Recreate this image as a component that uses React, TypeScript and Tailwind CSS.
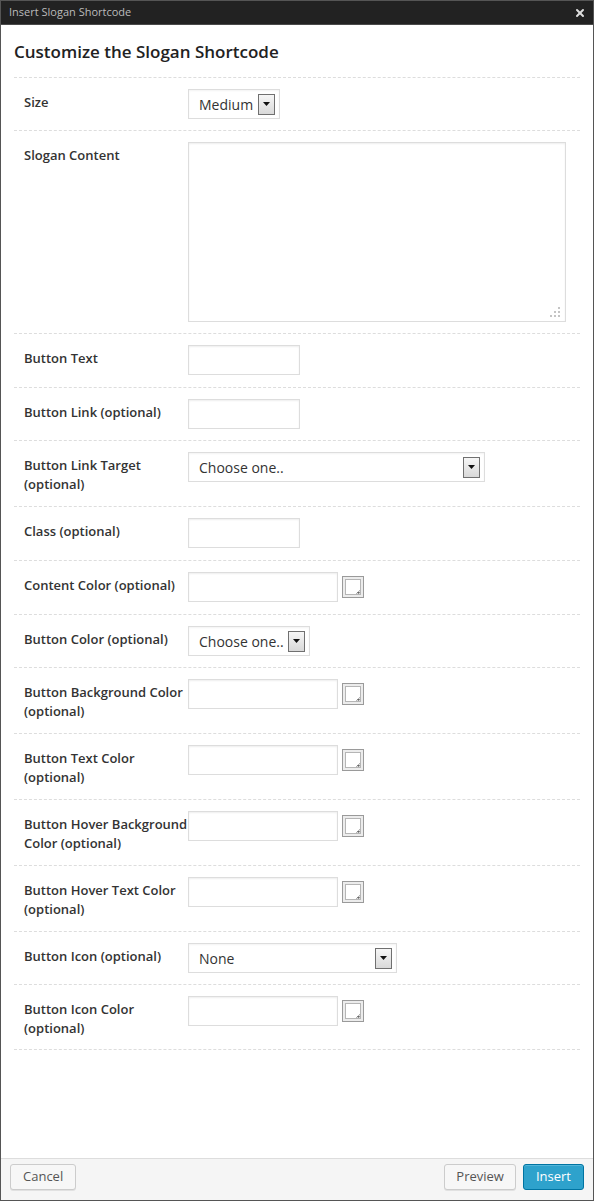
import React from 'react';
import { X } from 'lucide-react';

const font = { fontFamily: '"Open Sans", "Noto Sans", sans-serif' };

function Row({ label, children, pb = 'pb-[11px]' }: { label: React.ReactNode; children: React.ReactNode; pb?: string }) {
    return (
        <div className={`flex items-start border-b border-dashed border-[#dddddd] pl-[10px] pt-[11px] ${pb}`}>
            <div className="w-[164px] shrink-0 whitespace-nowrap pt-[4px] pb-[1px] text-[13px] font-semibold leading-[19px] text-[#333333]">
                {label}
            </div>
            <div className="flex items-start">{children}</div>
        </div>
    );
}

function Arrow() {
    return (
        <div className="flex h-[21px] w-[17px] items-center justify-center border border-[#707070] bg-gradient-to-b from-[#f6f6f6] to-[#d9d9d9]">
            <svg width="7" height="4" viewBox="0 0 7 4">
                <path d="M0 0h7L3.5 4z" fill="#111" />
            </svg>
        </div>
    );
}

function Select({ value, width }: { value: string; width: string }) {
    return (
        <div className={`flex h-[30px] ${width} items-center justify-between border border-[#dddddd] bg-white pl-[10px] pr-[4px] shadow-[inset_0_1px_2px_rgba(0,0,0,0.05)]`}>
            <span className="text-[14px] text-[#333333]">{value}</span>
            <Arrow />
        </div>
    );
}

function Input({ width = 'w-[112px]' }: { width?: string }) {
    return <div className={`h-[30px] ${width} border border-[#dddddd] bg-white shadow-[inset_0_1px_2px_rgba(0,0,0,0.07)]`} />;
}

function Swatch() {
    return (
        <svg className="ml-[4px] mt-[4px]" width="22" height="22" viewBox="0 0 22 22">
            <rect x="0.5" y="0.5" width="21" height="21" fill="#ececec" stroke="#9a9a9a" />
            <rect x="3.5" y="3.5" width="15" height="15" fill="#ffffff" stroke="#b5b5b5" />
            <path d="M13.5 18.5h5v-5z" fill="#e2e2e2" stroke="#b5b5b5" />
            <path d="M15 16h3l-1.5 2z" fill="#666" />
        </svg>
    );
}

function ColorField() {
    return (
        <>
            <Input width="w-[150px]" />
            <Swatch />
        </>
    );
}

export default function App() {
    return (
        <div style={font} className="flex h-[1201px] w-[594px] flex-col border border-[#555555] bg-white">
            {/* Title bar */}
            <div className="flex h-[24px] shrink-0 items-center justify-between border-b border-[#4a4a4a] bg-[#222222] pl-[8px] pr-[7px]">
                <span className="text-[11px] text-[#bbbbbb]">Insert Slogan Shortcode</span>
                <X className="text-[#dddddd]" size={12} strokeWidth={4} />
            </div>

            {/* Content */}
            <div className="flex-1 px-[13px]">
                <h2 className="border-b border-dashed border-[#dddddd] pt-[15px] pb-[13px] text-[17px] font-semibold leading-[24px] text-[#222222]">
                    Customize the Slogan Shortcode
                </h2>

                <Row label="Size">
                    <Select value="Medium" width="w-[92px]" />
                </Row>

                <Row label="Slogan Content">
                    <div className="relative h-[180px] w-[378px] border border-[#dddddd] bg-white shadow-[inset_0_1px_2px_rgba(0,0,0,0.07)]">
                        <svg className="absolute bottom-[3px] right-[4px]" width="11" height="11" viewBox="0 0 11 11">
                            <g fill="#c4c4c4">
                                <rect x="8" y="0" width="2" height="2" />
                                <rect x="4" y="4" width="2" height="2" />
                                <rect x="8" y="4" width="2" height="2" />
                                <rect x="0" y="8" width="2" height="2" />
                                <rect x="4" y="8" width="2" height="2" />
                                <rect x="8" y="8" width="2" height="2" />
                            </g>
                        </svg>
                    </div>
                </Row>

                <Row label="Button Text" pb="pb-[12px]">
                    <Input />
                </Row>

                <Row label="Button Link (optional)">
                    <Input />
                </Row>

                <Row label={<>Button Link Target<br />(optional)</>}>
                    <Select value="Choose one.." width="w-[297px]" />
                </Row>

                <Row label="Class (optional)" pb="pb-[12px]">
                    <Input />
                </Row>

                <Row label="Content Color (optional)" pb="pb-[12px]">
                    <ColorField />
                </Row>

                <Row label="Button Color (optional)">
                    <Select value="Choose one.." width="w-[122px]" />
                </Row>

                <Row label={<>Button Background Color<br />(optional)</>}>
                    <ColorField />
                </Row>

                <Row label={<>Button Text Color<br />(optional)</>}>
                    <ColorField />
                </Row>

                <Row label={<>Button Hover Background<br />Color (optional)</>}>
                    <ColorField />
                </Row>

                <Row label={<>Button Hover Text Color<br />(optional)</>}>
                    <ColorField />
                </Row>

                <Row label="Button Icon (optional)">
                    <Select value="None" width="w-[209px]" />
                </Row>

                <Row label={<>Button Icon Color<br />(optional)</>} pb="pb-[10px]">
                    <ColorField />
                </Row>
            </div>

            {/* Footer */}
            <div className="flex h-[42px] shrink-0 items-start justify-between border-t border-[#dddddd] bg-[#f5f5f5] px-[9px] pt-[5px]">
                <button className="h-[26px] rounded-[3px] border border-[#cccccc] bg-[#f7f7f7] px-[12px] text-[13px] text-[#555555] shadow-[0_1px_0_rgba(0,0,0,0.08)]">
                    Cancel
                </button>
                <div className="flex gap-[7px]">
                    <button className="h-[26px] rounded-[3px] border border-[#cccccc] bg-[#f7f7f7] px-[11px] text-[13px] text-[#555555] shadow-[0_1px_0_rgba(0,0,0,0.08)]">
                        Preview
                    </button>
                    <button className="h-[26px] rounded-[3px] border border-[#0074a2] bg-[#2ea2cc] px-[12px] text-[13px] text-white shadow-[inset_0_1px_0_rgba(120,200,230,0.5)]">
                        Insert
                    </button>
                </div>
            </div>
        </div>
    );
}
